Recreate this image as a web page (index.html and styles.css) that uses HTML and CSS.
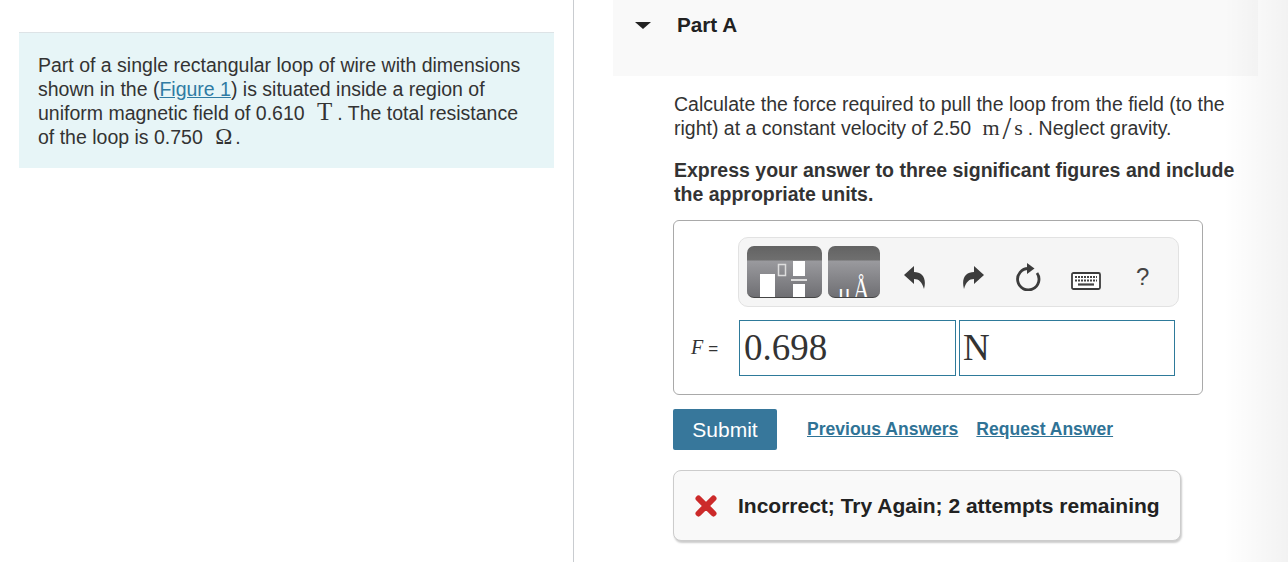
FILE: index.html
```html
<!DOCTYPE html>
<html lang="en">
<head>
<meta charset="utf-8">
<title>Part A</title>
<link rel="stylesheet" href="styles.css">
</head>
<body>
<div class="page">
  <aside class="left">
    <div class="intro">
      Part of a single rectangular loop of wire with dimensions shown in the (<a href="#" class="fig">Figure 1</a>) is situated inside a region of uniform magnetic field of 0.610 <span class="unit unit-t">T</span>. The total resistance of the loop is 0.750 <span class="unit unit-o">Ω</span>.
    </div>
  </aside>
  <main class="right">
    <header class="part-head">
      <svg class="caret" width="16" height="7" viewBox="0 0 16 7"><path d="M0 0H16L8 7Z" fill="#222"/></svg>
      <h2 class="part-title">Part A</h2>
    </header>
    <section class="content">
      <p class="q">Calculate the force required to pull the loop from the field (to the right) at a constant velocity of 2.50 <span class="unit unit-m">m<span class="slash">/</span>s</span>. Neglect gravity.</p>
      <p class="q strong">Express your answer to three significant figures and include the appropriate units.</p>
      <div class="answer">
        <div class="toolbar">
          <div class="tool tool-frac">
            <svg width="75" height="51" viewBox="0 0 75 51">
              <rect x="13" y="28" width="15" height="23" fill="#fff"/>
              <rect x="31.500" y="18.500" width="7" height="11" fill="none" stroke="#ddd" stroke-width="1.500"/>
              <rect x="46" y="15" width="12" height="15" fill="#fff"/>
              <rect x="44" y="33" width="16" height="2" fill="#ddd"/>
              <rect x="46" y="38" width="12" height="13" fill="#fff"/>
            </svg>
          </div>
          <div class="tool tool-unit"><span class="ua"><span class="mu">μ</span><span class="ang">Å</span></span></div>
          <div class="icons">
            <svg class="ic" width="22" height="24" viewBox="0 0 22 24"><path d="M0 10 10 1V7C18 7 23 13 20 24 18 17 15 14 10 14V19Z" fill="#3c3c3c"/></svg>
            <svg class="ic" width="22" height="24" viewBox="0 0 22 24"><path d="M22 10 12 1V7C4 7-1 13 2 24 4 17 7 14 12 14V19Z" fill="#3c3c3c"/></svg>
            <svg class="ic" width="25" height="28" viewBox="0 0 25 28"><path d="M12.500 5.500A10.700 10.700 0 1 0 21 10" fill="none" stroke="#3c3c3c" stroke-width="2.800"/><path d="M11 0 18.500 5.500 11 11Z" fill="#3c3c3c"/></svg>
            <svg class="ic kb" width="30" height="18" viewBox="0 0 30 18"><rect x="1" y="1" width="28" height="16" rx="1.500" fill="#fff" stroke="#3c3c3c" stroke-width="1.800"/><path d="M4 5H26M4 8.500H26" stroke="#444" stroke-width="2" stroke-dasharray="2 1"/><path d="M7 12.500H23" stroke="#444" stroke-width="2.200"/></svg>
            <span class="help">?</span>
          </div>
        </div>
        <div class="eq">
          <span class="lbl"><i>F</i> <span class="eqs">=</span></span>
          <div class="field f1">0.698</div>
          <div class="field f2">N</div>
        </div>
      </div>
      <div class="actions">
        <button class="submit" type="button">Submit</button>
        <a href="#" class="alink">Previous Answers</a>
        <a href="#" class="alink">Request Answer</a>
      </div>
      <div class="feedback">
        <svg width="22" height="22" viewBox="0 0 22 22"><path d="M3.500 3.500 18.500 18.500M18.500 3.500 3.500 18.500" stroke="#cc2a2a" stroke-width="6" stroke-linecap="round"/></svg>
        <span>Incorrect; Try Again; 2 attempts remaining</span>
      </div>
    </section>
  </main>
</div>
</body>
</html>
```
FILE: styles.css
```css
* { box-sizing: border-box; }
html, body { margin: 0; padding: 0; }
body {
  font-family: "Liberation Sans", Arial, sans-serif;
  font-size: 19.500px;
  line-height: 24px;
  color: #333;
  background: #fff;
}
.page { display: flex; width: 1288px; height: 562px; overflow: hidden; position: relative; }
.page::after {
  content: "";
  position: absolute;
  top: 0;
  right: 0;
  bottom: 0;
  width: 64px;
  background: linear-gradient(to right, rgba(0, 0, 0, 0), rgba(0, 0, 0, .05));
  pointer-events: none;
}
.left {
  width: 574px;
  flex: none;
  border-right: 1px solid #c9ccd0;
  padding: 32px 19px 0 19px;
}
.intro {
  background: #e7f5f7;
  border-top: 1px solid #dde3e6;
  padding: 20px 19px 18px;
  height: 136px;
}
.fig { color: #2f7ba3; text-decoration: underline; }
.unit { font-family: "Liberation Serif", serif; line-height: 0; }
.unit-t { font-size: 25px; margin-left: 7px; margin-right: 5px; }
.unit-o { font-size: 23px; margin-left: 7px; margin-right: 3px; }
.unit-m { font-size: 22px; margin-left: 6px; margin-right: 5px; }
.slash { font-size: 31px; font-weight: 400; margin: 0 3px; vertical-align: -4px; }
.right { flex: 1; padding-left: 39px; }
.part-head {
  width: 645px;
  height: 76px;
  background: #f9f9f9;
  display: flex;
  align-items: flex-start;
  padding: 13px 0 0 22px;
}
.caret { margin-top: 9px; flex: none; }
.part-title { margin: 0 0 0 26px; font-size: 20.700px; line-height: 24px; font-weight: 700; color: #222; }
.content { padding: 16px 0 0 60px; width: 585px; }
.q { margin: 0 0 18px 1px; width: 565px; }
.strong { font-weight: 700; margin-bottom: 14px; }
.answer {
  width: 530px;
  height: 175px;
  border: 1px solid #a9a9a9;
  border-radius: 6px;
  padding: 16px 23px 0 16px;
  background: #fff;
}
.toolbar {
  width: 441px;
  height: 70px;
  margin-left: 48px;
  background: #f5f5f5;
  border: 1px solid #e2e2e2;
  border-radius: 10px;
  display: flex;
  align-items: flex-start;
  padding: 8px 0 0 8px;
  gap: 6px;
}
.tool {
  height: 52px;
  border-radius: 7px;
  overflow: hidden;
  flex: none;
  background: linear-gradient(to bottom, #636363 0, #6f6f6f 14px, #9a9a9e 15px, #6f6f73 100%);
  border-bottom: 1px solid #444;
}
.tool-frac { width: 75px; }
.tool-frac svg { display: block; }
.tool-unit { width: 52px; color: #fff; font-family: "Liberation Serif", serif; }
.ua { display: block; padding: 31px 0 0 10px; line-height: 30px; white-space: nowrap; }
.mu { font-size: 24px; }
.ang { display: inline-block; font-size: 23px; margin-left: 2px; transform: scaleY(1.350); transform-origin: 50% 72%; }
.icons { display: flex; align-items: center; height: 60px; flex: 1; padding-top: 1px; }
.icons .ic { flex: none; }
.ic:nth-child(1) { margin-left: 18px; }
.ic:nth-child(2) { margin-left: 36px; }
.ic:nth-child(3) { margin-left: 32px; }
.ic:nth-child(4) { margin-left: 30px; }
.kb { margin-top: 9px; }
.help { margin-left: 35px; font-size: 24px; color: #444; }
.eq { display: flex; align-items: center; margin-top: 13px; height: 56px; }
.lbl { width: 49px; padding-left: 1px; font-family: "Liberation Serif", serif; font-size: 20px; flex: none; white-space: nowrap; }
.eqs { font-family: "Liberation Sans", sans-serif; font-size: 17px; }
.field {
  height: 56px;
  border: 1px solid #2e7a9a;
  font-family: "Liberation Serif", serif;
  font-size: 37px;
  line-height: 53px;
  padding-left: 4px;
  flex: none;
}
.f1 { width: 217px; margin-right: 3px; }
.f2 { width: 216px; padding-left: 3px; }
.actions { display: flex; align-items: center; margin-top: 14px; height: 41px; }
.submit {
  width: 104px;
  height: 41px;
  background: #37779b;
  color: #fff;
  border: 0;
  border-radius: 2px;
  font: 21px/24px "Liberation Sans", sans-serif;
  padding: 0;
  margin-right: 30px;
}
.alink { color: #2f7396; font-weight: 700; font-size: 17.550px; text-decoration: underline; margin: 0 18px 2px 0; }
.feedback {
  margin-top: 20px;
  width: 508px;
  height: 71px;
  background: #f9f9f9;
  border: 1px solid #ccc;
  border-radius: 8px;
  box-shadow: 1px 2px 2px #ccc;
  display: flex;
  align-items: center;
  padding-left: 21px;
  gap: 21px;
  font-weight: 700;
  font-size: 21px;
  color: #222;
}
```
